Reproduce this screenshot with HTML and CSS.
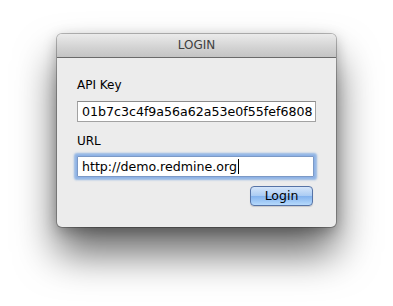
FILE: index.html
```html
<!DOCTYPE html>
<html lang="en">
<head>
	<meta charset="UTF-8">
	<title>Login</title>
	<link rel="stylesheet" href="styles.css">
</head>
<body>
	<div class="stage">
		<div class="window">
			<div class="titlebar">LOGIN</div>
			<div class="content">
				<div class="label">API Key</div>
				<div class="field">01b7c3c4f9a56a62a53e0f55fef6808</div>
				<div class="label label-url">URL</div>
				<div class="field field-focus">http://demo.redmine.org<span class="caret"></span></div>
				<div class="actions">
					<a href="javascript:;" class="btn">Login</a>
				</div>
			</div>
		</div>
	</div>
</body>
</html>
```

FILE: styles.css
```css
*{
	margin: 0;
	padding: 0;
	box-sizing: border-box;
}
html,body{
	height: 306px;
}
body{
	background-color: #fff;
	font-family: "DejaVu Sans", "Liberation Sans", sans-serif;
	font-size: 12px;
	color: #000;
}
.stage{
	display: flex;
	height: 306px;
	padding: 34px 0 0 57px;
}
.window{
	width: 279px;
	height: 193px;
	background-color: #ececec;
	border-radius: 5px;
	box-shadow: 0 0 0 1px rgba(0,0,0,.25), 0 26px 40px rgba(0,0,0,.6), 0 4px 14px rgba(0,0,0,.25);
	overflow: hidden;
}
.titlebar{
	height: 24px;
	line-height: 22px;
	text-align: center;
	font-size: 12px;
	color: #404040;
	background: linear-gradient(#ebebeb, #d2d2d2 60%, #c4c4c4);
	border-bottom: 1px solid #6a6a6a;
}
.content{
	display: flex;
	flex-direction: column;
	padding: 19px 20px 0 20px;
}
.label{
	height: 16px;
	line-height: 16px;
	margin-bottom: 8px;
}
.label-url{
	margin-top: 11px;
	margin-bottom: 7px;
}
.field{
	width: 239px;
	height: 21px;
	line-height: 19px;
	padding-left: 4px;
	background-color: #fff;
	border: 1px solid #a2a2a2;
	border-top-color: #8c8c8c;
	white-space: nowrap;
	overflow: hidden;
	font-size: 12.6px;
}
.field-focus{
	width: 237px;
	border-color: #7c9ac6;
	border-radius: 1px;
	box-shadow: 0 0 0 1px #8fb2e6, 0 0 2px 3px rgba(110,160,225,.7);
}
.caret{
	display: inline-block;
	width: 1px;
	height: 15px;
	margin-left: 1px;
	vertical-align: -3px;
	background-color: #000;
}
.actions{
	display: flex;
	justify-content: flex-end;
	padding-right: 3px;
	margin-top: 9px;
}
.btn{
	display: block;
	width: 63px;
	height: 20px;
	line-height: 18px;
	text-align: center;
	color: #000;
	font-size: 12.5px;
	text-decoration: none;
	border: 1px solid #5673a6;
	border-radius: 4px;
	background: linear-gradient(#d6e6fa, #a9cbf3 50%, #82b2ee 51%, #b6dafc);
	box-shadow: 0 1px 1px rgba(0,0,0,.15);
}
```
